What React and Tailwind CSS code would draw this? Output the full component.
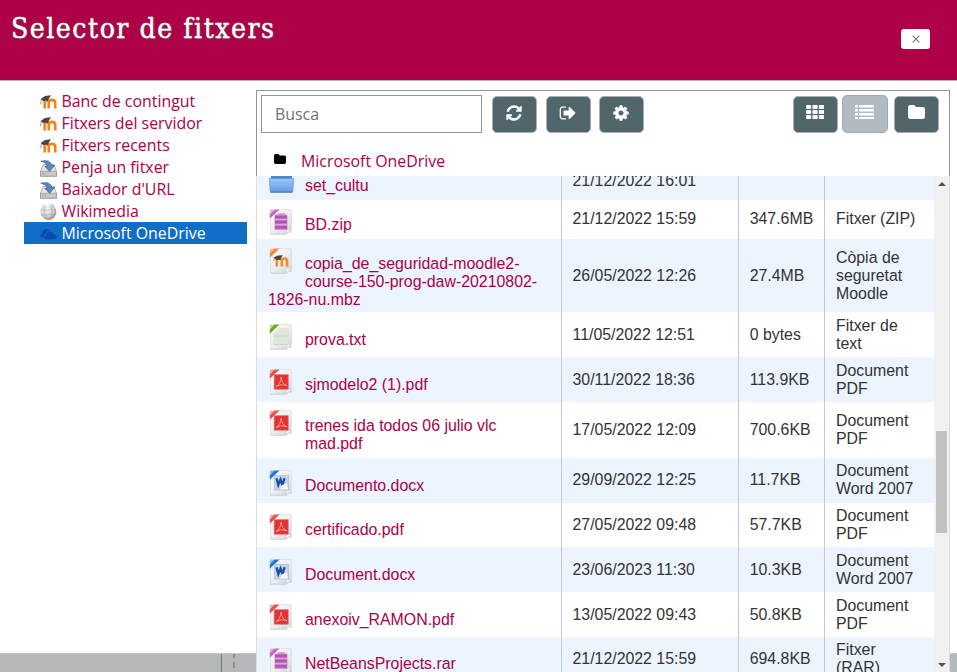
import React from "react";

const paths = {
  refresh:
    "M1639 1056q0 5-1 7-64 268-268 434.5t-478 166.5q-146 0-282.5-55t-243.5-157l-129 129q-19 19-45 19t-45-19-19-45v-448q0-26 19-45t45-19h448q26 0 45 19t19 45-19 45l-137 137q71 66 161 102t187 36q134 0 250-65t186-179q11-17 53-117 8-23 30-23h192q13 0 22.5 9.5t9.5 22.5zm25-800v448q0 26-19 45t-45 19h-448q-26 0-45-19t-19-45 19-45l138-138q-148-137-349-137-134 0-250 65t-186 179q-11 17-53 117-8 23-30 23h-199q-13 0-22.5-9.5t-9.5-22.5v-7q65-268 270-434.5t480-166.5q146 0 284 55.5t245 156.5l130-129q19-19 45-19t45 19 19 45z",
  signOut:
    "M704 1440q0 4 1 20t.5 26.5-3 23.5-10 19.5-20.5 6.5h-320q-119 0-203.5-84.5t-84.5-203.5v-704q0-119 84.5-203.5t203.5-84.5h320q13 0 22.5 9.5t9.5 22.5q0 4 1 20t.5 26.5-3 23.5-10 19.5-20.5 6.5h-320q-66 0-113 47t-47 113v704q0 66 47 113t113 47h312l11.5 1 11.5 3 8 5.5 7 9 2 13.5zm928-544q0 26-19 45l-544 544q-19 19-45 19t-45-19-19-45v-288h-448q-26 0-45-19t-19-45v-384q0-26 19-45t45-19h448v-288q0-26 19-45t45-19 45 19l544 544q19 19 19 45z",
  cog:
    "M1152 896q0-106-75-181t-181-75-181 75-75 181 75 181 181 75 181-75 75-181zm512-109v222q0 12-8 23t-20 13l-185 28q-19 54-39 91 35 50 107 138 10 12 10 25t-9 23q-27 37-99 108t-94 71q-12 0-26-9l-138-108q-44 23-91 38-16 136-29 186-7 28-36 28h-222q-14 0-24.5-8.5t-11.5-21.5l-28-184q-49-16-90-37l-141 107q-10 9-25 9-14 0-25-11-126-114-165-168-7-10-7-23 0-12 8-23 15-21 51-66.5t54-70.5q-27-50-41-99l-183-27q-13-2-21-12.5t-8-23.5v-222q0-12 8-23t19-13l186-28q14-46 39-92-40-57-107-138-10-12-10-24 0-10 9-23 26-36 98.5-107.5t94.5-71.5q13 0 26 10l138 107q44-23 91-38 16-136 29-186 7-28 36-28h222q14 0 24.5 8.5t11.5 21.5l28 184q49 16 90 37l142-107q9-9 24-9 13 0 25 10 129 119 165 170 7 8 7 22 0 12-8 23-15 21-51 66.5t-54 70.5q26 50 41 98l183 28q13 2 21 12.5t8 23.5z",
};

function Glyph({ d }) {
  return (
    <svg viewBox="0 0 1792 1792" className="h-[18px] w-[18px]" fill="currentColor">
      <path d={d} />
    </svg>
  );
}

function GridGlyph() {
  return (
    <svg viewBox="0 0 18 14" className="h-[14px] w-[18px]" fill="currentColor">
      {[0, 5, 10].map((y) =>
        [0, 6.4, 12.8].map((x) => <rect key={x + "-" + y} x={x} y={y} width="5.2" height="4" rx="0.8" />)
      )}
    </svg>
  );
}

function ListGlyph() {
  return (
    <svg viewBox="0 0 19 14" className="h-[14px] w-[19px]" fill="currentColor">
      {[0, 4, 8, 12].map((y) => (
        <g key={y}>
          <rect x="0" y={y} width="3" height="2.4" rx="0.4" />
          <rect x="4" y={y} width="15" height="2.4" rx="0.4" />
        </g>
      ))}
    </svg>
  );
}

function FolderGlyph({ className }) {
  return (
    <svg viewBox="0 0 17 14" className={className} fill="currentColor">
      <path d="M0 2.2Q0 0 2.2 0h3.3q2.2 0 2.2 2h7q2.3 0 2.3 2.3v7.4q0 2.3-2.3 2.3H2.3Q0 14 0 11.700z" />
    </svg>
  );
}

function MoodleIcon() {
  return (
    <svg viewBox="0 0 17 17" className="h-[17px] w-[17px]">
      <path d="M4.700 15.500V9.300q0-2 2-2t2 2V15.500M8.700 15.500V9.500q0-2.600 3.200-2.600t3.300 2.800V15.500" fill="none" stroke="#f98012" strokeWidth="2.600" />
      <path d="M.5 6 5 3 11 2.300 8.500 6.200 8 8.200Q5.500 6.600 3.500 8.200z" fill="#4a4541" />
      <path d="M1.200 6.500 .7 11.500" stroke="#8b8378" strokeWidth=".8" />
    </svg>
  );
}

function DriveIcon() {
  return (
    <svg viewBox="0 0 17 17" className="mt-[2px] h-[17px] w-[17px]">
      <path d="M3.200 4.500h10.600l2.800 7v4.700H.4v-4.700z" fill="#e3e3e1" stroke="#9b9b99" strokeWidth=".7" />
      <path d="M.5 11.300h16v4.900H.5z" fill="#c9cac7" stroke="#8c8c8a" strokeWidth=".6" />
      <path d="M2.500 12.500v2M4 12.500v2M5.500 12.500v2" stroke="#999" strokeWidth=".6" />
      <path d="M.8 1.200Q10.500-1 11.700 5.300h3L9.500 11.200 4.800 6.300h2.500Q6.600 2.600 .8 1.200z" fill="#5b87be" stroke="#2e5b98" strokeWidth=".7" />
    </svg>
  );
}

function GlobeIcon() {
  return (
    <svg viewBox="0 0 17 17" className="h-[17px] w-[17px]">
      <defs>
        <radialGradient id="globe" cx=".4" cy=".35" r=".7">
          <stop offset="0" stopColor="#f6f6f6" />
          <stop offset=".6" stopColor="#d2d2d2" />
          <stop offset="1" stopColor="#858585" />
        </radialGradient>
      </defs>
      <path d="M2 3.500 4 1.500l2.500 1.500 2 .2 2-2.500 3 .8L16 6.500l.4 4-2.400 4.500-4 2-5-.6L1 12.500 .5 7z" fill="url(#globe)" />
      <path d="M1 6.500q3 1.500 7 .5t8 0M1.500 11.500q4 1 7 0t6.500 .5M5 3q-1.500 6 .8 12.500M11 2.500q2.500 6 .2 13" fill="none" stroke="#9c9c9c" strokeWidth=".5" />
    </svg>
  );
}

function CloudIcon() {
  return (
    <svg viewBox="0 0 17 17" className="h-[17px] w-[17px]" fill="#094ab2">
      <path d="M3 12.500Q0 12.500 .3 10 .6 8 2.700 7.700 3 4.500 6.200 4q2.800-.3 4 2-3.600-.2-4.200 3-2.500 .8-1.600 3.500z" />
      <path d="M6.500 14.500Q4.200 14.500 4.400 12.200q.2-1.900 2.200-2.200 .5-3.500 4-3.300 2.600 .2 3.200 2.800 2.800-.1 3 2.500 .1 2.500-2.300 2.500z" />
    </svg>
  );
}

function FileIcon({ type }) {
  if (type === "folder") {
    return (
      <svg viewBox="0 0 25 24" className="ml-px h-[24px] w-[25px]">
        <defs>
          <linearGradient id="folder" x1="0" y1="0" x2="0" y2="1">
            <stop offset="0" stopColor="#9cc8f8" />
            <stop offset="1" stopColor="#609cea" />
          </linearGradient>
        </defs>
        <path d="M2 3h8l2 3h11v8H2z" fill="#4f86c9" />
        <path d="M.4 9.500h24.200L23.800 22q0 1-1.500 1H2.700q-1.400 0-1.500-1z" fill="url(#folder)" stroke="#5b91d6" strokeWidth=".7" />
        <path d="M1.400 23.100h22" stroke="#5f7fa8" strokeWidth="1.400" />
      </svg>
    );
  }
  const corner = { archive: "#c667bd", moodle: "#f58634", text: "#6aae20", pdf: "#e9504a", word: "#1f78d1" }[type];
  const gradientId = "sheet-" + type;
  return (
    <svg viewBox="0 0 24 26" className="mt-px ml-px h-[26px] w-[24px]">
      <defs>
        <linearGradient id={gradientId} x1="0" y1="0" x2="1" y2="1">
          <stop offset="0" stopColor="#ffffff" />
          <stop offset=".55" stopColor="#ededf0" />
          <stop offset="1" stopColor="#cfd1d7" />
        </linearGradient>
      </defs>
      <path d="M1 24.300q0 1.500 1.400 1.500h15L22.600 20.500v3" fill="#b9bbc0" opacity=".7" />
      <path d="M9.500 .5h12q1 0 1 1v18.300L17 24.700H2.500q-1 0-1-1V8.500z" fill={"url(#" + gradientId + ")"} stroke="#dadce0" strokeWidth=".7" />
      <path d="M22.500 19.800 17 24.700l.8-4q2.500 .2 4.700-.9z" fill="#fff" stroke="#c5c7cc" strokeWidth=".5" />
      <path d="M.8 9.700V5.500L5.500 .4h5z" fill={corner} />
      <path d="M.8 5.500V2q0-1.500 1.500-1.500h3.200z" fill={corner} opacity=".45" />
      {type === "archive" && (
        <g>
          <path d="M5.500 6.500q0-1 1-1h2.500V4.200h7v1.300h1.500q1 0 1 1v14.500h-13z" fill="#d990d3" />
          <path d="M6 8h12M6 13h12M6 18.200h12" stroke="#ac58b3" strokeWidth="3" />
          <path d="M6 10.500h12M6 15.600h12" stroke="#e0a5dd" strokeWidth="1" />
        </g>
      )}
      {type === "moodle" && (
        <g>
          <path d="M7.800 18.500V13q0-2.500 2.500-2.500t2.500 2.500v5.500M12.800 18.500V13q0-2.500 2.500-2.500t2.700 2.700v5.300" fill="none" stroke="#f58a2c" strokeWidth="2.600" />
          <path d="M4.500 9.500 9 7.500l5-.2-2.200 2.800-.5 2Q9 11 7.400 12z" fill="#48433f" />
          <path d="M5 9.500 4.800 13" stroke="#8a7d70" strokeWidth=".8" />
        </g>
      )}
      {type === "text" && (
        <g>
          <path d="M4 9.500 10.500 4H20v17.500H4z" fill="#dde8d8" />
          <path d="M5 12h14M5 20.500h14" stroke="#bed7b8" strokeWidth=".8" />
        </g>
      )}
      {type === "pdf" && (
        <g>
          <path d="M5.200 5.700h14v14.500h-14z" fill="#e5322e" stroke="#c9706e" strokeWidth=".7" />
          <path d="M7 17.500q4.300-1.800 5.200-9.500 .8 7.500 5.500 8.500-5.500-2-10.700 1z" fill="none" stroke="#ffb0aa" strokeWidth=".8" />
        </g>
      )}
      {type === "word" && (
        <g>
          <path d="M5.500 5.500h14v14.500h-14z" fill="#c3d6ee" stroke="#a3bfdf" strokeWidth=".7" />
          <path d="M7.500 8.200 9.300 15l2.200-5.500 1.900 5.500 2.200-6.800" fill="none" stroke="#1751a6" strokeWidth="2.300" />
          <path d="M12.500 15.500l5-2 1.500 6h-8z" fill="#f7fbff" />
        </g>
      )}
    </svg>
  );
}

const sources = [
  { label: "Banc de contingut", Icon: MoodleIcon },
  { label: "Fitxers del servidor", Icon: MoodleIcon },
  { label: "Fitxers recents", Icon: MoodleIcon },
  { label: "Penja un fitxer", Icon: DriveIcon },
  { label: "Baixador d'URL", Icon: DriveIcon },
  { label: "Wikimedia", Icon: GlobeIcon },
  { label: "Microsoft OneDrive", Icon: CloudIcon, active: true },
];

const files = [
  { name: "set_cultu", icon: "folder", date: "21/12/2022 16:01", size: "", kind: "", row: "h-[24px]", pad: "-mt-[7px]", cell: "-mt-[14px]" },
  { name: "BD.zip", icon: "archive", date: "21/12/2022 15:59", size: "347.6MB", kind: "Fitxer (ZIP)", row: "h-[39px]", pad: "pt-[8px]" },
  { name: "copia_de_seguridad-moodle2-course-150-prog-daw-20210802-1826-nu.mbz", icon: "moodle", date: "26/05/2022 12:26", size: "27.4MB", kind: "Còpia de seguretat Moodle", row: "h-[73px]", pad: "pt-[8px]", cell: "pt-px" },
  { name: "prova.txt", icon: "text", date: "11/05/2022 12:51", size: "0 bytes", kind: "Fitxer de text", row: "h-[45px]", pad: "pt-[11px]", cell: "pt-px" },
  { name: "sjmodelo2 (1).pdf", icon: "pdf", date: "30/11/2022 18:36", size: "113.9KB", kind: "Document PDF", row: "h-[45px]", pad: "pt-[11px]", cell: "pt-px" },
  { name: "trenes ida todos 06 julio vlc mad.pdf", icon: "pdf", date: "17/05/2022 12:09", size: "700.6KB", kind: "Document PDF", row: "h-[56px]", pad: "pt-[7px]" },
  { name: "Documento.docx", icon: "word", date: "29/09/2022 12:25", size: "11.7KB", kind: "Document Word 2007", row: "h-[45px]", pad: "pt-[11px]" },
  { name: "certificado.pdf", icon: "pdf", date: "27/05/2022 09:48", size: "57.7KB", kind: "Document PDF", row: "h-[44px]", pad: "pt-[10px]" },
  { name: "Document.docx", icon: "word", date: "23/06/2023 11:30", size: "10.3KB", kind: "Document Word 2007", row: "h-[45px]", pad: "pt-[11px]", cell: "pt-px" },
  { name: "anexoiv_RAMON.pdf", icon: "pdf", date: "13/05/2022 09:43", size: "50.8KB", kind: "Document PDF", row: "h-[45px]", pad: "pt-[11px]", cell: "pt-px" },
  { name: "NetBeansProjects.rar", icon: "archive", date: "21/12/2022 15:59", size: "694.8KB", kind: "Fitxer (RAR)", row: "h-[45px]", pad: "pt-[10px]", kindWidth: "w-[86px]" },
];

function ToolButton({ children, className }) {
  return (
    <button className={"flex justify-center rounded-[5px] border text-white " + className}>{children}</button>
  );
}

const dark = "mt-[5px] h-[37px] w-[45px] border-[#a7afb2] bg-[#50666b] pt-[7px]";

function FileRow({ file, striped }) {
  const cell = "flex items-center " + (file.cell || "pb-px");
  return (
    <div className={"flex shrink-0 overflow-hidden " + file.row + (striped ? " bg-[#ebf4ff]" : " bg-white")}>
      <div className="w-[304px] shrink-0 pl-[11px] pr-[20px]">
        <div className={file.pad}>
          <div className="float-left h-[40px] w-[37px]">
            <FileIcon type={file.icon} />
          </div>
          <a className="block break-words pt-[8px] text-[#ae0047]">{file.name}</a>
        </div>
      </div>
      <div className="flex w-[177px] shrink-0 border-l border-[#c6c8cb] pl-[10.5px]">
        <div className={cell}>{file.date}</div>
      </div>
      <div className="flex w-[86px] shrink-0 border-l border-[#c6c8cb] pl-[10.7px]">
        <div className={cell}>{file.size}</div>
      </div>
      <div className="w-[110px] shrink-0 border-l border-[#c6c8cb] pl-[11px]">
        <div className={"h-full " + cell + " " + (file.kindWidth || "w-[90px]")}>{file.kind}</div>
      </div>
    </div>
  );
}

export default function App() {
  return (
    <div className="flex h-[672px] w-[957px] flex-col overflow-hidden bg-white font-['Open_Sans','Noto_Sans',sans-serif] text-[15.9px] leading-[24px]">
      <header className="flex h-[81px] shrink-0 justify-between border-b border-[#b4b4b4] bg-[#ae0047] pl-[11px] pr-[27px]">
        <h1 className="pt-[9px] font-['Roboto_Slab','DejaVu_Serif_Condensed','DejaVu_Serif',serif] text-[28px] leading-[40px] tracking-[1.55px] whitespace-nowrap text-white [-webkit-text-stroke:0.4px_white] [text-shadow:1px_1px_2px_#555]">
          Selector de fitxers
        </h1>
        <button className="mt-[29px] flex h-[20px] w-[29px] items-center justify-center rounded-[3px] bg-white text-[#777]">
          <svg viewBox="0 0 8 8" className="h-[8px] w-[8px]" stroke="currentColor" strokeWidth="1.200">
            <path d="M.7 .7 7.300 7.300M7.300 .7 .7 7.300" />
          </svg>
        </button>
      </header>

      <div className="flex min-h-0 flex-1">
        <div className="flex w-[256px] shrink-0 flex-col">
          <nav className="flex flex-1 flex-col pt-[9px] pl-[24px]">
            {sources.map(({ label, Icon, active }) => (
              <a
                key={label}
                className={
                  "flex h-[22px] w-[223px] items-center gap-[4.5px] pl-[16px] whitespace-nowrap " +
                  (active ? "bg-[#106ec6] text-white" : "text-[#ae0047]")
                }
              >
                <Icon />
                <span>{label}</span>
              </a>
            ))}
          </nav>
          <div className="flex h-[19px] shrink-0 border-t border-[#c6c8c9] bg-[#b4b8bb]">
            <div className="w-[222px] border-r border-[#747c80]" />
            <div className="ml-[11px] flex w-[2px] flex-col gap-[4px] overflow-hidden">
              <i className="h-[4px] bg-[#8b8f92]" />
              <i className="h-[6px] bg-[#8b8f92]" />
            </div>
          </div>
        </div>

        <main className="mt-[9px] flex w-[694px] shrink-0 flex-col">
          <div className="h-[86px] shrink-0 border-x border-t border-[#8f959e]">
            <div className="flex h-[42px] pl-[4px]">
              <div className="mt-[4px] flex h-[38px] w-[221px] items-center border border-[#8f959e] pl-[13px] text-[#6a737b]">Busca</div>
              <ToolButton className={"ml-[9.5px] " + dark}><Glyph d={paths.refresh} /></ToolButton>
              <ToolButton className={"ml-[9px] " + dark}><Glyph d={paths.signOut} /></ToolButton>
              <ToolButton className={"ml-[8px] " + dark}><Glyph d={paths.cog} /></ToolButton>
              <ToolButton className={"ml-[149px] " + dark}><span className="pt-[1px]"><GridGlyph /></span></ToolButton>
              <ToolButton className="mt-[4px] ml-[4px] h-[38px] w-[46px] border-[#9daab7] bg-[#b0bbc4] pt-[8px]"><span className="pt-[1px]"><ListGlyph /></span></ToolButton>
              <ToolButton className={"ml-[6px] " + dark}><span className="pt-[1px]"><FolderGlyph className="h-[14px] w-[17px]" /></span></ToolButton>
            </div>
            <div className="flex h-[43px] items-center pt-[13px] pl-[17px]">
              <FolderGlyph className="mb-[4px] h-[10px] w-[12px] text-black" />
              <span className="ml-[15px] text-[#ae0047]">Microsoft OneDrive</span>
            </div>
          </div>

          <div className="flex min-h-0 flex-1 overflow-hidden border-x border-[#dddddd] font-['Liberation_Sans',Arial,sans-serif] text-[15.88px] leading-[18px] text-[#333]">
            <div className="w-[677px] shrink-0">
              {files.map((file, i) => (
                <FileRow key={file.name} file={file} striped={i % 2 === 0} />
              ))}
            </div>
            <div className="flex w-[15px] flex-col items-center bg-[#f1f1f1] pt-[6px] pb-[5px]">
              <svg viewBox="0 0 8 4" className="h-[4px] w-[8px] shrink-0"><path d="M0 4 4 0l4 4z" fill="#505050" /></svg>
              <div className="mt-[245px] h-[102px] w-[11px] shrink-0 bg-[#c1c1c1]" />
              <svg viewBox="0 0 8 4" className="mt-auto h-[4px] w-[8px] shrink-0"><path d="M0 0h8L4 4z" fill="#505050" /></svg>
            </div>
          </div>
        </main>

        <div className="flex flex-1 flex-col justify-end">
          <div className="h-[19px] border-t border-[#c6c8c9] bg-[#b4b8bb]" />
        </div>
      </div>
    </div>
  );
}
